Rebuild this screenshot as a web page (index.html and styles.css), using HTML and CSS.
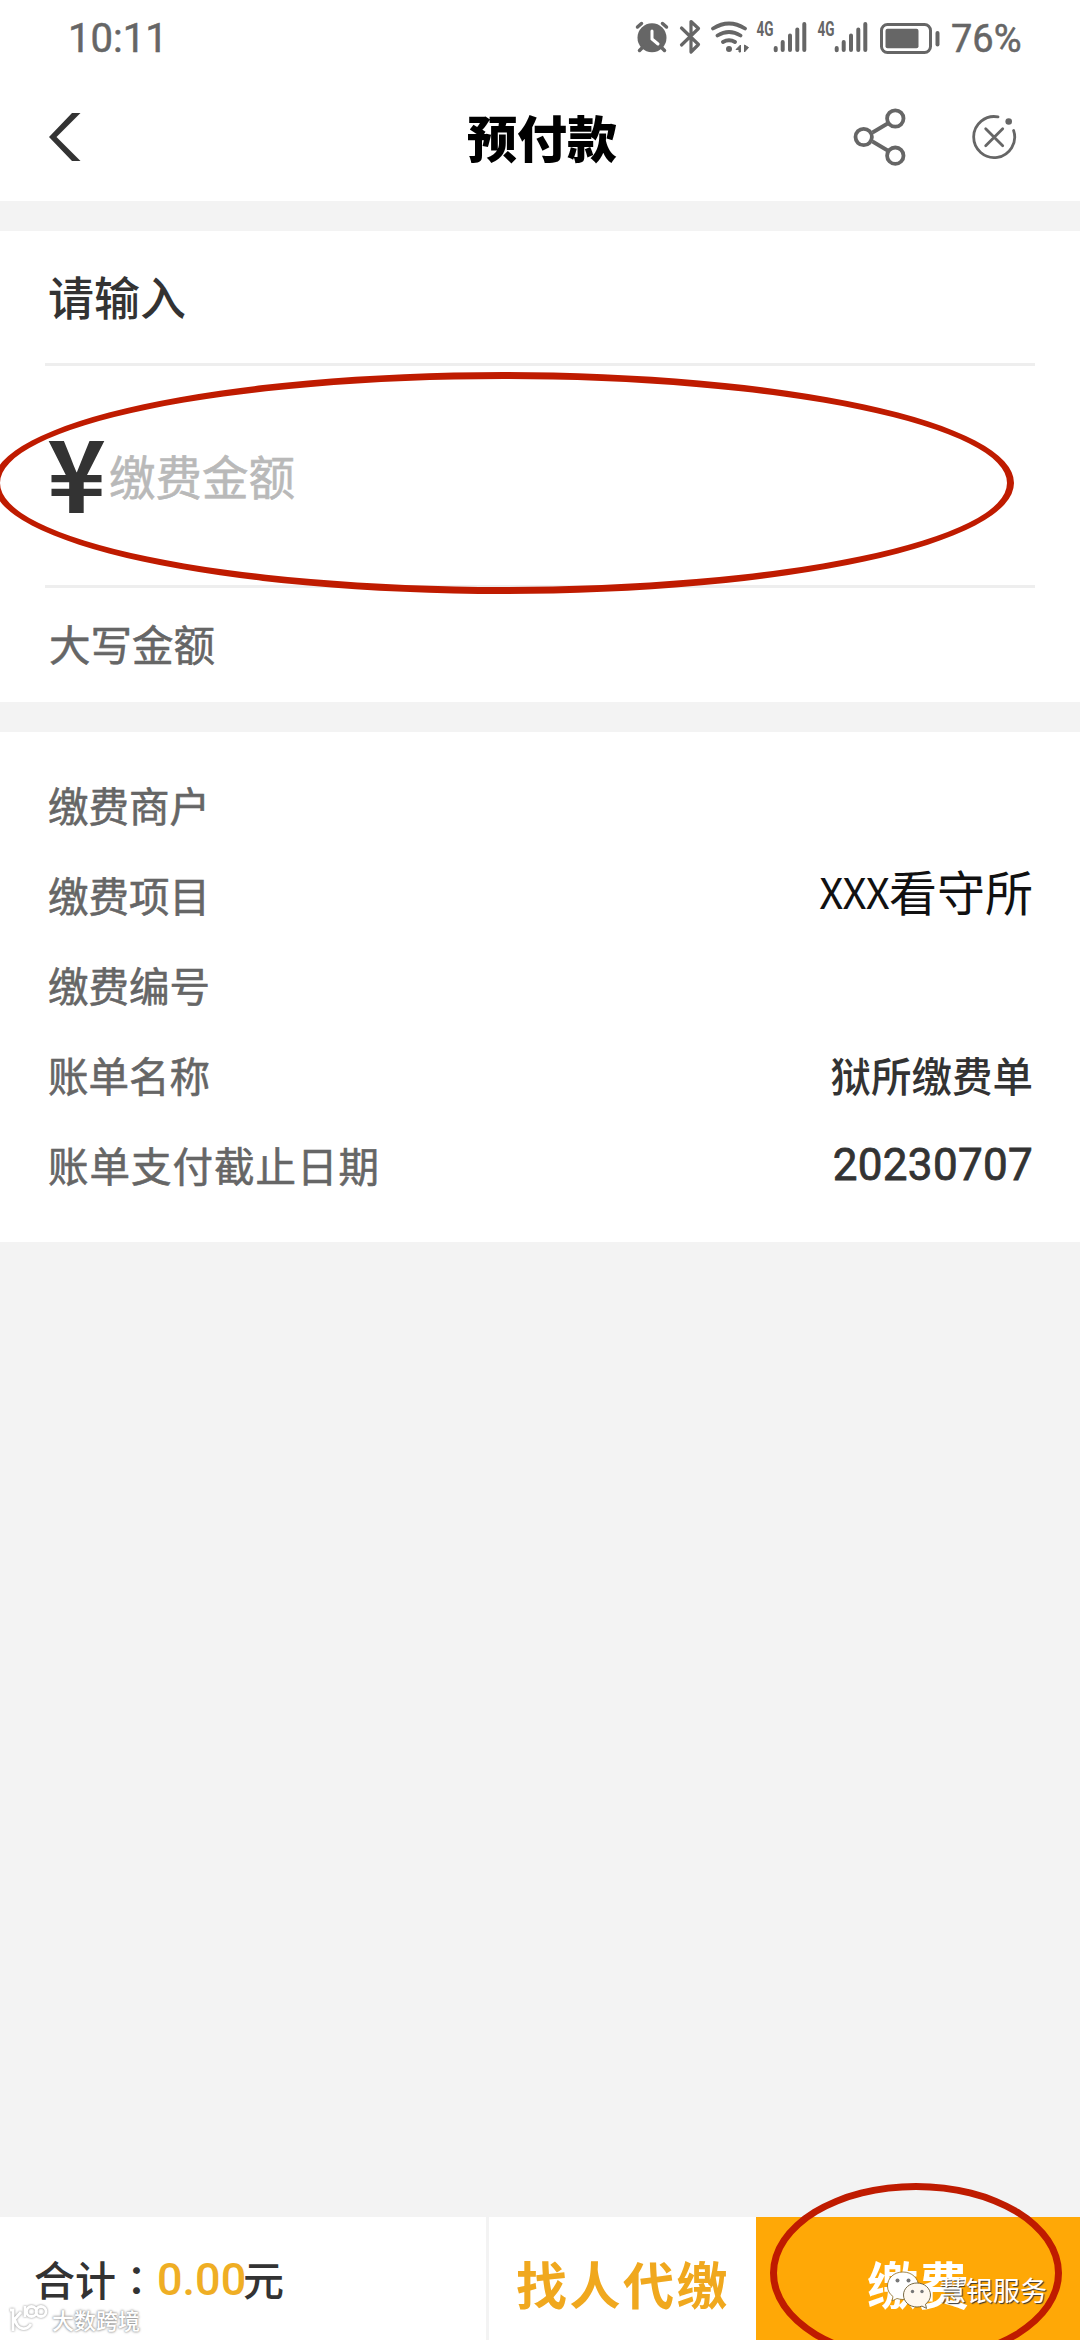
FILE: index.html
```html
<!DOCTYPE html>
<html lang="zh-CN">
<head>
    <meta charset="UTF-8">
    <meta name="viewport" content="width=device-width, initial-scale=1.0">
    <title>预付款</title>
    <link rel="stylesheet" href="styles.css">
</head>
<body>
    <div class="page">
        <div class="status-bar">
            <span class="time">10:11</span>
            <svg class="status-icons" width="310" height="40" viewBox="634 18 310 40">
                <!-- alarm -->
                <g fill="#666" stroke="#666" stroke-linecap="round">
                    <circle cx="652" cy="37.7" r="14.5" stroke="none"/>
                    <path d="M637.5 27l4-3.500M662.500 23.500l4 3.500M643 47l-3.500 3.500M661 47l3.500 3.500" stroke-width="3.500" fill="none"/>
                    <path d="M652 31v8l6 5" stroke="#fff" stroke-width="3" fill="none"/>
                </g>
                <!-- bluetooth -->
                <path d="M681.500 28l17 16.500-7.500 7.500V21.500l7.500 7-17 16.500" fill="none" stroke="#666" stroke-width="3.200" stroke-linecap="round" stroke-linejoin="round"/>
                <!-- wifi -->
                <g fill="none" stroke="#666" stroke-width="3.800" stroke-linecap="round">
                    <path d="M713 28.500q16-10 32 0M717.500 35.500q11.500-7 23 0M723 42q6-3.500 12 0"/>
                    <circle cx="729" cy="49" r="3" fill="#666" stroke="none"/>
                </g>
                <path d="M736 49.500l4.500-4.500v7h-1.500v-2.500zM744.500 45v7l4-4.500z" fill="#666" stroke="#666" stroke-width="1"/>
                <!-- signals -->
                <text class="net" x="756.500" y="35.500" textLength="17" lengthAdjust="spacingAndGlyphs">4G</text>
                <path class="signal" d="M775.700 48v2.200M782.700 42v8M790 35.500v14.500M797.300 29.500v20.500M804.300 24v26"/>
                <text class="net" x="817.500" y="35.500" textLength="17" lengthAdjust="spacingAndGlyphs">4G</text>
                <path class="signal" d="M836.700 48v2.200M843.700 42v8M851 35.500v14.500M858.300 29.500v20.500M865.300 24v26"/>
                <!-- battery -->
                <rect x="881.500" y="24.500" width="49" height="28" rx="6" fill="none" stroke="#666" stroke-width="3"/>
                <rect x="885.500" y="28.700" width="33" height="19.500" rx="2" fill="#666"/>
                <rect x="935.500" y="31" width="4" height="15.500" rx="2" fill="#666"/>
            </svg>
            <span class="battery-text">76%</span>
        </div>

        <div class="header">
            <svg class="back" width="32" height="50" viewBox="0 0 32 50">
                <path d="M23 1h8.500L7.500 25l24 24H23L0 25z" fill="#333"/>
            </svg>
            <h1>预付款</h1>
            <svg class="share" width="54" height="60" viewBox="0 0 54 60" fill="none" stroke="#666" stroke-width="3.800">
                <path d="M19.500 25.500l16-9.500M19.500 34.500l16 9.500"/>
                <circle cx="10.700" cy="30" r="8.200"/>
                <circle cx="42.300" cy="11.500" r="8.200"/>
                <circle cx="42.300" cy="48.700" r="8.200"/>
            </svg>
            <svg class="close" width="46" height="46" viewBox="0 0 46 46" fill="none" stroke="#666" stroke-width="2.800" stroke-linecap="round">
                <path d="M27 2.900A20.500 20.500 0 1 0 42.600 16.500"/>
                <path d="M14.700 14.700l17 17M31.700 14.700l-17 17"/>
                <circle cx="37.700" cy="7.500" r="3.300" fill="#666" stroke="none"/>
            </svg>
        </div>

        <div class="card amount-card">
            <div class="input-title">请输入</div>
            <div class="amount-row">
                <span class="yen">¥</span>
                <span class="placeholder">缴费金额</span>
                <div class="mark mark-amount"></div>
            </div>
            <div class="amount-cn">大写金额</div>
        </div>

        <div class="card info-card">
            <div class="info-row"><span>缴费商户</span></div>
            <div class="info-row"><span>缴费项目</span><span class="value merchant"><span class="latin">XXX</span>看守所</span></div>
            <div class="info-row"><span>缴费编号</span></div>
            <div class="info-row"><span>账单名称</span><span class="value">狱所缴费单</span></div>
            <div class="info-row wide"><span>账单支付截止日期</span><span class="value date">20230707</span></div>
        </div>

        <div class="footer">
            <div class="total">合计<span class="colon">：</span><span class="price">0.00</span>元</div>
            <div class="other-pay">找人代缴</div>
            <div class="pay">缴费</div>
            <div class="mark mark-pay"></div>

            <div class="wechat-tag">
                <svg width="46" height="40" viewBox="0 0 46 40">
                    <path d="M17 2C8 2 1.500 8 1.500 16c0 4.500 2 8 5.500 10.500L6 31l5-2.500c2 .6 4 1 6 1 9 0 15.500-6 15.500-13.500S26 2 17 2z" fill="#fff" stroke="#8a6a20" stroke-width=".8"/>
                    <path d="M31 13c-7.500 0-13.500 5.300-13.500 12S23.500 37 31 37c1.800 0 3.500-.3 5-.9l4.500 2.300-1-4.200c3-2.200 5-5.400 5-9.200 0-6.700-6-12-13.500-12z" fill="#fff8ee" stroke="#6a5a30" stroke-width=".9"/>
                    <g fill="#777">
                        <circle cx="11.500" cy="10.500" r="2"/>
                        <circle cx="22.500" cy="10.500" r="2"/>
                        <circle cx="26.500" cy="21.500" r="1.700"/>
                        <circle cx="36" cy="21.500" r="1.700"/>
                    </g>
                </svg>
                <span>慧银服务</span>
            </div>

            <div class="site-tag">
                <svg width="42" height="30" viewBox="0 0 42 30" fill="none" stroke="#fff" stroke-width="2.800">
                    <path d="M2 6h3v21M5 17l8-9M7 16c2 9 11 12 16 4"/>
                    <path d="M17 2v11"/>
                    <circle cx="23.500" cy="7.500" r="5"/>
                    <circle cx="33" cy="7.500" r="5"/>
                </svg>
                <span>大数跨境</span>
            </div>
        </div>
    </div>
</body>
</html>
```
FILE: styles.css
```css
* {
    margin: 0;
    padding: 0;
    box-sizing: border-box;
}

body {
    font-family: 'Noto Sans CJK SC', sans-serif;
    background-color: #f3f3f3;
    color: #333;
}

svg {
    display: block;
    flex: none;
}

.page {
    width: 1080px;
    height: 2340px;
    display: flex;
    flex-direction: column;
    overflow: hidden;
}

/* Status bar */
.status-bar {
    height: 76px;
    padding: 0 59px 0 68px;
    display: flex;
    align-items: center;
    background: #fff;
    color: #666;
    font-family: Roboto, sans-serif;
    -webkit-text-stroke: 0.5px #666;
}

.time {
    font-size: 40px;
    line-height: 76px;
    padding-top: 2px;
}

.status-icons {
    margin-left: auto;
}

.net {
    font-family: Roboto, sans-serif;
    font-size: 20px;
    font-weight: 700;
    fill: #666;
    stroke: none;
}

.signal {
    fill: none;
    stroke: #666;
    stroke-width: 4px;
    stroke-linecap: round;
}

.battery-text {
    width: 70px;
    margin-left: 7px;
    padding-top: 2px;
    font-size: 38px;
    white-space: nowrap;
}

/* Header */
.header {
    height: 125px;
    padding: 0 63px 3px 49px;
    display: flex;
    align-items: center;
    background: #fff;
}

.header h1 {
    margin-left: 386px;
    margin-top: -3px;
    width: 150px;
    font-size: 50px;
    font-weight: 900;
    line-height: 60px;
    color: #000;
    white-space: nowrap;
}

.share {
    margin-left: 236px;
}

.close {
    margin-left: auto;
}

/* Cards */
.card {
    background: #fff;
}

.amount-card {
    margin-top: 30px;
    height: 471px;
    padding: 0 45px;
}

.input-title {
    height: 135px;
    padding-left: 3px;
    border-bottom: 3px solid #eee;
    font-size: 46px;
    font-weight: 500;
    line-height: 128px;
}

.amount-row {
    position: relative;
    height: 222px;
    padding-left: 2px;
    border-bottom: 3px solid #eee;
    display: flex;
    align-items: center;
}

.yen {
    width: 62px;
    font-size: 100px;
    font-weight: 700;
    line-height: 207px;
    height: 219px;
}

.placeholder {
    font-size: 46.500px;
    line-height: 217px;
    height: 219px;
    color: #b9b9b9;
    -webkit-text-stroke: 0.6px #b9b9b9;
}

.amount-cn {
    padding-left: 4px;
    font-size: 41.500px;
    line-height: 110px;
    color: #666;
    -webkit-text-stroke: 0.6px #666;
}

.info-card {
    margin-top: 30px;
    height: 510px;
    padding: 27px 47px 0 48px;
}

.info-row {
    height: 90px;
    display: flex;
    justify-content: space-between;
    align-items: center;
    font-size: 40.500px;
    color: #666;
    -webkit-text-stroke: 0.6px #666;
}

.info-row.wide {
    letter-spacing: 1px;
}

.value {
    color: #333;
    font-weight: 500;
    -webkit-text-stroke: 0;
}

.merchant {
    padding-bottom: 7px;
    font-size: 48px;
    font-weight: 400;
    color: #111;
    line-height: 60px;
}

.latin {
    font-size: 42px;
    letter-spacing: -0.8px;
    vertical-align: 2px;
}

.date {
    padding-top: 2px;
    font-family: Roboto, sans-serif;
    font-size: 44px;
    font-weight: 400;
    letter-spacing: 0.3px;
    -webkit-text-stroke: 0.8px #333;
}

/* Red circles */
.mark {
    position: absolute;
    border: 7px solid #bf1b00;
    border-radius: 50%;
}

.mark-amount {
    left: -52px;
    top: 6px;
    width: 1021px;
    height: 222px;
}

.mark-pay {
    left: 770px;
    top: -34px;
    width: 292px;
    height: 180px;
}

/* Footer */
.footer {
    position: relative;
    height: 123px;
    margin-top: auto;
    display: flex;
    background: #fff;
}

.total {
    width: 489px;
    padding: 40px 0 0 34px;
    border-right: 3px solid #f3f3f3;
    font-size: 41px;
    font-weight: 500;
    line-height: 42px;
    display: flex;
}

.colon {
    font-family: 'Noto Sans CJK JP', sans-serif;
}

.price {
    width: 86px;
    padding-top: 2px;
    font-family: Roboto, sans-serif;
    font-size: 45px;
    color: #efae24;
}

.other-pay {
    width: 267px;
    padding-left: 27px;
    font-size: 51px;
    font-weight: 700;
    line-height: 132px;
    letter-spacing: 2.500px;
    color: #f0a81e;
    white-space: nowrap;
}

.pay {
    flex: 1;
    background: #ffa806;
    color: #fff;
    font-size: 51px;
    font-weight: 700;
    line-height: 132px;
    text-align: center;
}

.wechat-tag {
    position: absolute;
    left: 886px;
    top: 53px;
    display: flex;
    align-items: center;
    gap: 7px;
    font-size: 27px;
    line-height: 40px;
    color: #fff;
    text-shadow: 1px 1px 1px #333;
}

.site-tag {
    position: absolute;
    left: 8px;
    top: 87px;
    display: flex;
    align-items: center;
    gap: 2px;
    font-size: 22px;
    font-weight: 500;
    line-height: 24px;
    color: #fff;
    text-shadow: 0 0 2px #888, 0 0 3px #999;
}

.site-tag svg {
    filter: drop-shadow(0 0 1px #888);
}
```
